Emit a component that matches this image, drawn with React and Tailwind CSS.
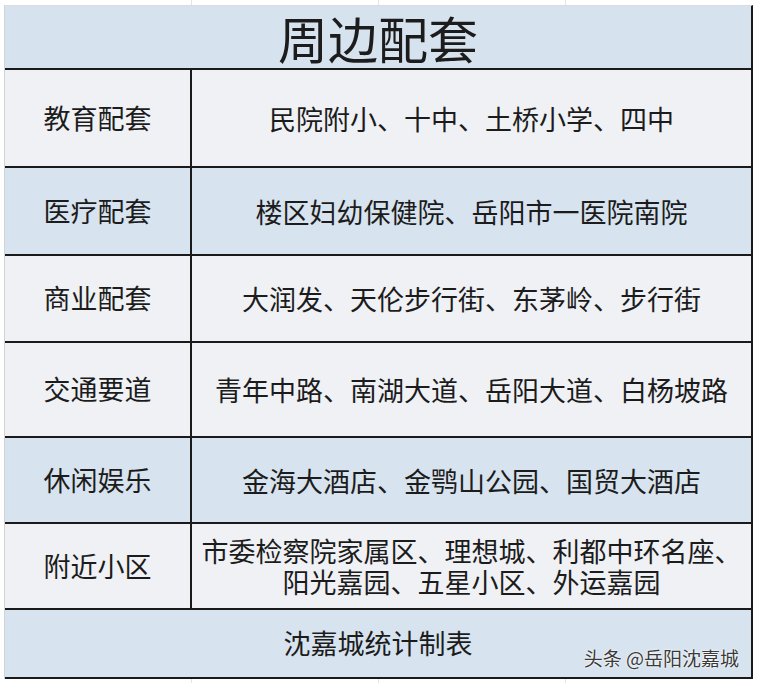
import React from 'react';

const rows = [
  { label: '教育配套', value: ['民院附小、十中、土桥小学、四中'], h: 'h-[98px]', bg: 'bg-[#eff1f5]' },
  { label: '医疗配套', value: ['楼区妇幼保健院、岳阳市一医院南院'], h: 'h-[88px]', bg: 'bg-[#d7e3ee]' },
  { label: '商业配套', value: ['大润发、天伦步行街、东茅岭、步行街'], h: 'h-[87px]', bg: 'bg-[#eff1f5]' },
  { label: '交通要道', value: ['青年中路、南湖大道、岳阳大道、白杨坡路'], h: 'h-[95px]', bg: 'bg-[#eff1f5]' },
  { label: '休闲娱乐', value: ['金海大酒店、金鹗山公园、国贸大酒店'], h: 'h-[86px]', bg: 'bg-[#d7e3ee]' },
  {
    label: '附近小区',
    value: ['市委检察院家属区、理想城、利都中环名座、', '阳光嘉园、五星小区、外运嘉园'],
    h: 'h-[86px]',
    bg: 'bg-[#eff1f5]',
  },
];

export default function App() {
  return (
    <div
      className="relative w-[757px] h-[683px] bg-white overflow-hidden text-[#1c1c1c]"
      style={{ fontFamily: '"Noto Sans CJK SC", "Noto Sans", sans-serif' }}
    >
      {/* spreadsheet gridlines peeking out around the table */}
      <div className="absolute inset-x-0 top-0 h-[5px] flex">
        <div className="w-[192px] border-r border-[#e4e4e4]" />
        <div className="w-[187px] border-r border-[#e4e4e4]" />
        <div className="w-[187px] border-r border-[#e4e4e4]" />
      </div>
      <div className="absolute inset-x-0 bottom-0 h-[4px] flex">
        <div className="w-[192px] border-r border-[#e4e4e4]" />
        <div className="w-[187px] border-r border-[#e4e4e4]" />
        <div className="w-[187px] border-r border-[#e4e4e4]" />
      </div>

      <div className="pt-[5px] pl-[4px]">
        <div className="w-[749px] border-r-2 border-l border-[#1a1a1a] border-l-[#d0d4d8] border-t border-t-[#dcdcdc]">
          <div className="h-[62px] bg-[#d6e2ed] flex items-center justify-center text-[50px] leading-none">
            周边配套
          </div>
          {rows.map((r) => (
            <div key={r.label} className={`flex ${r.h} ${r.bg} border-t-2 border-[#1a1a1a]`}>
              <div className="w-[187px] shrink-0 flex items-center justify-center text-[27px] border-r-2 border-[#1a1a1a]">
                {r.label}
              </div>
              <div className="flex-1 flex flex-col items-center justify-center text-[27px] leading-[31px] text-center">
                {r.value.map((line) => (
                  <div key={line}>{line}</div>
                ))}
              </div>
            </div>
          ))}
          <div className="relative h-[71px] bg-[#d7e3ee] border-t-2 border-b-2 border-[#1a1a1a] flex items-center justify-center text-[27px]">
            沈嘉城统计制表
            <span
              className="absolute right-[12px] bottom-[10px] text-[19px] text-[#3a3a3a] leading-none"
              style={{ textShadow: '0 0 2px #fff, 0 0 2px #fff' }}
            >
              头条 @岳阳沈嘉城
            </span>
          </div>
        </div>
      </div>
    </div>
  );
}
